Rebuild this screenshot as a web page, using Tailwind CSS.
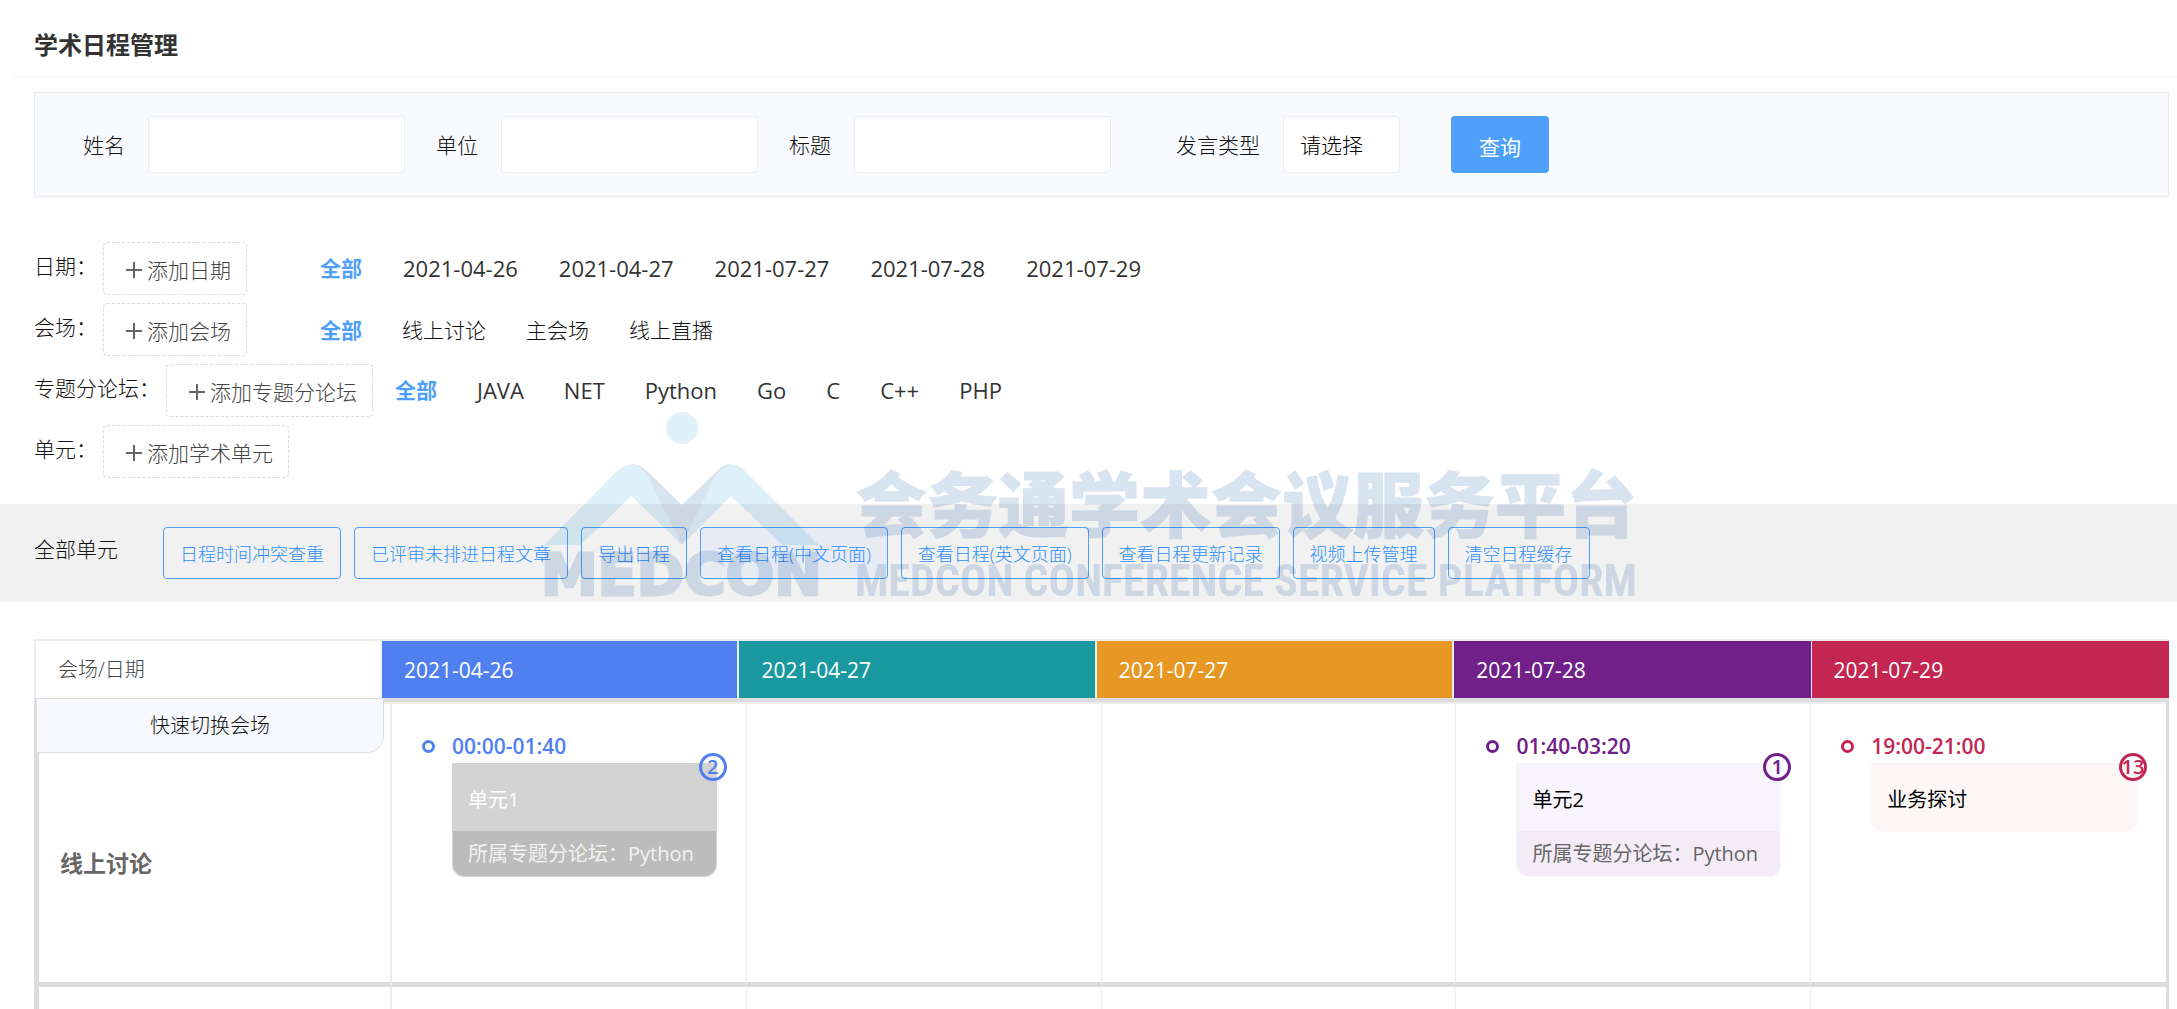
<!DOCTYPE html>
<html lang="zh-CN">
  <head>
    <meta charset="UTF-8" />
    <meta name="viewport" content="width=device-width, initial-scale=1.0" />
    <title>学术日程管理</title>
    <script src="https://cdn.jsdelivr.net/npm/@tailwindcss/browser@4"></script>
  </head>
  <body class="h-screen overflow-hidden bg-white font-['Open_Sans','Noto_Sans_CJK_SC',sans-serif] text-[21px] leading-8 text-[#333]">
    <header class="ml-3 flex h-[77px] items-center border-b border-[#f3f3f3] pl-[22px] pb-[10px] pt-6">
      <h1 class="text-2xl font-bold">学术日程管理</h1>
    </header>

    <!-- search -->
    <form class="ml-[34px] mr-2 mt-[15px] flex items-center border border-[#e6e8ea] bg-[#f9fafe] py-[23px] pl-12 font-light text-[#111]">
      <label for="name">姓名</label>
      <input id="name" type="text" class="ml-[23px] mr-[31px] h-[57px] w-[257px] rounded border border-[#ebeef0] bg-white px-4" />
      <label for="unit">单位</label>
      <input id="unit" type="text" class="ml-[23px] mr-[31px] h-[57px] w-[257px] rounded border border-[#ebeef0] bg-white px-4" />
      <label for="title">标题</label>
      <input id="title" type="text" class="ml-[23px] mr-[65px] h-[57px] w-[257px] rounded border border-[#ebeef0] bg-white px-4" />
      <label for="type">发言类型</label>
      <select id="type" class="ml-[23px] h-[57px] w-[117px] appearance-none rounded border border-[#ebeef0] bg-white px-4 text-black">
        <option>请选择</option>
      </select>
      <button type="button" class="ml-[51px] h-[57px] rounded bg-[#4d9ffa] px-7 pt-1 font-normal text-white">查询</button>
    </form>

    <!-- filters -->
    <section class="ml-[34px] mt-[45px] flex flex-col gap-2">
      <div class="flex items-center">
        <div class="flex min-w-[264px] items-center font-light text-[#111]">
          <span class="mr-[6px] pb-[5px]">日期：</span>
          <button type="button" class="flex h-[53px] items-center rounded border border-dashed border-[#d9d9d9] pl-[22px] pr-[15px] pt-[3px] text-[#444]">
            <svg class="mr-[5px] size-4" viewBox="0 0 16 16" stroke="#666" stroke-width="2"><path d="M0 8h16M8 0v16" /></svg>
            添加日期
          </button>
        </div>
        <nav class="ml-[22px] flex items-center gap-[41px] pb-[2px] text-[22px]">
          <a href="#" class="text-[21px] font-bold text-[#4d9ffa]">全部</a>
          <a href="#">2021-04-26</a>
          <a href="#">2021-04-27</a>
          <a href="#">2021-07-27</a>
          <a href="#">2021-07-28</a>
          <a href="#">2021-07-29</a>
        </nav>
      </div>
      <div class="flex items-center">
        <div class="flex min-w-[264px] items-center font-light text-[#111]">
          <span class="mr-[6px] pb-[5px]">会场：</span>
          <button type="button" class="flex h-[53px] items-center rounded border border-dashed border-[#d9d9d9] pl-[22px] pr-[15px] pt-[3px] text-[#444]">
            <svg class="mr-[5px] size-4" viewBox="0 0 16 16" stroke="#666" stroke-width="2"><path d="M0 8h16M8 0v16" /></svg>
            添加会场
          </button>
        </div>
        <nav class="ml-[22px] flex items-center gap-10 font-light text-[#111]">
          <a href="#" class="font-bold text-[#4d9ffa]">全部</a>
          <a href="#">线上讨论</a>
          <a href="#">主会场</a>
          <a href="#">线上直播</a>
        </nav>
      </div>
      <div class="flex items-center">
        <div class="flex min-w-[264px] items-center font-light text-[#111]">
          <span class="mr-[6px] pb-[5px]">专题分论坛：</span>
          <button type="button" class="flex h-[53px] items-center rounded border border-dashed border-[#d9d9d9] pl-[22px] pr-[15px] pt-[3px] text-[#444]">
            <svg class="mr-[5px] size-4" viewBox="0 0 16 16" stroke="#666" stroke-width="2"><path d="M0 8h16M8 0v16" /></svg>
            添加专题分论坛
          </button>
        </div>
        <nav class="ml-[22px] flex items-center gap-10 pb-[2px] text-[22px]">
          <a href="#" class="text-[21px] font-bold text-[#4d9ffa]">全部</a>
          <a href="#">JAVA</a>
          <a href="#">NET</a>
          <a href="#">Python</a>
          <a href="#">Go</a>
          <a href="#">C</a>
          <a href="#">C++</a>
          <a href="#">PHP</a>
        </nav>
      </div>
      <div class="flex items-center font-light text-[#111]">
        <span class="mr-[6px] pb-[5px]">单元：</span>
        <button type="button" class="flex h-[53px] items-center rounded border border-dashed border-[#d9d9d9] pl-[22px] pr-[15px] pt-[3px] text-[#444]">
          <svg class="mr-[5px] size-4" viewBox="0 0 16 16" stroke="#666" stroke-width="2"><path d="M0 8h16M8 0v16" /></svg>
          添加学术单元
        </button>
      </div>
    </section>

    <!-- toolbar -->
    <section class="mt-[26px] flex h-[98px] items-center gap-[13px] bg-[#f1f1f1] pl-[34px] text-lg font-light text-[#2f8ff8]">
      <h2 class="mr-8 pb-2 text-[21px] text-[#111]">全部单元</h2>
      <button type="button" class="h-[52px] rounded border border-[#4d9ffa] px-4 pt-[2px]">日程时间冲突查重</button>
      <button type="button" class="h-[52px] rounded border border-[#4d9ffa] px-4 pt-[2px]">已评审未排进日程文章</button>
      <button type="button" class="h-[52px] rounded border border-[#4d9ffa] px-4 pt-[2px]">导出日程</button>
      <button type="button" class="h-[52px] rounded border border-[#4d9ffa] bg-[#e6ebf4] px-4 pt-[2px]">查看日程(中文页面)</button>
      <button type="button" class="h-[52px] rounded border border-[#4d9ffa] px-4 pt-[2px]">查看日程(英文页面)</button>
      <button type="button" class="h-[52px] rounded border border-[#4d9ffa] px-4 pt-[2px]">查看日程更新记录</button>
      <button type="button" class="h-[52px] rounded border border-[#4d9ffa] px-4 pt-[2px]">视频上传管理</button>
      <button type="button" class="h-[52px] rounded border border-[#4d9ffa] px-4 pt-[2px]">清空日程缓存</button>
    </section>

    <!-- schedule -->
    <section class="relative ml-[34px] mr-2 mt-[37px] text-xl leading-7">
      <table class="w-full table-fixed border-separate border-spacing-0 border-l-2 border-t-2 border-[#ededed] text-left">
        <thead>
          <tr class="h-[57px] text-[21px] text-white">
            <th class="w-[346px] border-r border-[#ededed] pl-[22px] text-xl font-light text-[#444]">会场/日期</th>
            <th class="border-r-2 border-[#ededed] bg-[#5080f0] pl-[22px] font-medium">2021-04-26</th>
            <th class="border-r-2 border-[#ededed] bg-[#1a989f] pl-[22px] font-medium">2021-04-27</th>
            <th class="border-r-2 border-[#ededed] bg-[#e79724] pl-[22px] font-medium">2021-07-27</th>
            <th class="border-r border-[#ededed] bg-[#702088] pl-[22px] font-medium">2021-07-28</th>
            <th class="bg-[#c32651] pl-[22px] font-medium">2021-07-29</th>
          </tr>
        </thead>
      </table>
      <table class="w-full table-fixed border-separate border-spacing-0 border-l-[5px] border-r-[3px] border-t-4 border-[#dcdcdc]">
        <tbody>
          <tr class="h-[285px] align-top">
            <th class="w-[353px] border-b-[5px] border-r-2 border-t-2 border-b-[#dcdcdc] border-r-[#ededed] border-t-[#ededed] pl-[21px] pt-10 text-left align-middle text-[23px] font-bold text-[#666]">线上讨论</th>
            <td class="border-b-[5px] border-r border-t-2 border-b-[#dcdcdc] border-r-[#ededed] border-t-[#ededed] pl-[30px] pr-[29px] pt-7">
              <div class="flex items-center gap-[17px] text-[21px] font-semibold text-[#5080f0]">
                <i class="size-[13px] rounded-full border-[3px] border-current"></i>
                <span>00:00-01:40</span>
              </div>
              <article class="relative ml-[30px] mt-[3px] rounded-b-xl border border-[#d3d3d3] bg-[#d3d3d3] text-white">
                <h3 class="px-[15px] pb-[17px] pt-[22px]">单元1</h3>
                <p class="rounded-b-xl bg-[#bcbcbc] px-[15px] pb-2 pt-[9px] text-[#f2f2f2]">所属专题分论坛：Python</p>
                <span class="absolute -right-[11px] -top-[11px] flex size-7 items-center justify-center rounded-full border-[3px] border-[#5080f0] font-semibold text-[#5080f0]">2</span>
              </article>
            </td>
            <td class="border-b-[5px] border-r border-t-2 border-b-[#dcdcdc] border-r-[#ededed] border-t-[#ededed]"></td>
            <td class="border-b-[5px] border-r border-t-2 border-b-[#dcdcdc] border-r-[#ededed] border-t-[#ededed]"></td>
            <td class="border-b-[5px] border-r border-t-2 border-b-[#dcdcdc] border-r-[#ededed] border-t-[#ededed] pl-[30px] pr-[29px] pt-7">
              <div class="flex items-center gap-[17px] text-[21px] font-semibold text-[#702088]">
                <i class="size-[13px] rounded-full border-[3px] border-current"></i>
                <span>01:40-03:20</span>
              </div>
              <article class="relative ml-[30px] mt-[3px] rounded-b-xl border border-[#f8f4fb] bg-[#f8f4fb] text-black">
                <h3 class="px-[15px] pb-[17px] pt-[22px]">单元2</h3>
                <p class="rounded-b-xl bg-[#f3ecf7] px-[15px] pb-2 pt-[9px] text-[#666]">所属专题分论坛：Python</p>
                <span class="absolute -right-[11px] -top-[11px] flex size-7 items-center justify-center rounded-full border-[3px] border-[#702088] font-semibold text-[#702088]">1</span>
              </article>
            </td>
            <td class="border-b-[5px] border-t-2 border-b-[#dcdcdc] border-t-[#ededed] pl-[30px] pr-[29px] pt-7">
              <div class="flex items-center gap-[17px] text-[21px] font-semibold text-[#c32651]">
                <i class="size-[13px] rounded-full border-[3px] border-current"></i>
                <span>19:00-21:00</span>
              </div>
              <article class="relative ml-[30px] mt-[3px] rounded-b-xl border border-[#fcf6f6] bg-[#fcf6f6] text-black">
                <h3 class="px-[15px] pb-[17px] pt-[22px]">业务探讨</h3>
                <span class="absolute -right-[11px] -top-[11px] flex size-7 items-center justify-center rounded-full border-[3px] border-[#c32651] font-semibold text-[#c32651]">13</span>
              </article>
            </td>
          </tr>
          <tr class="h-[285px]">
            <th class="border-r-2 border-[#ededed]"></th>
            <td class="border-r border-[#ededed]"></td>
            <td class="border-r border-[#ededed]"></td>
            <td class="border-r border-[#ededed]"></td>
            <td class="border-r border-[#ededed]"></td>
            <td></td>
          </tr>
        </tbody>
      </table>
      <button type="button" class="absolute left-[2px] top-[59px] h-[55px] w-[348px] rounded-br-2xl border border-[#dcdde0] bg-[#f8f9fe] font-light text-[#111]">快速切换会场</button>
    </section>

    <!-- watermark -->
    <div class="pointer-events-none fixed inset-0 flex items-center justify-center mix-blend-multiply">
      <svg class="h-[190px] w-[1100px]" viewBox="540 410 1100 190" fill="#d9e4f1">
        <circle cx="683" cy="428" r="16" fill="#def0f9" />
        <path d="M632 464Q641 464 648 471L683 505L718 471Q725 464 732 464L683 545Z" />
        <path d="M545 545L618 471Q632 458 645 471Q650 477 654 487L683 545L632.5 496L581.500 545Z" fill="#def0f9" />
        <path d="M820 545L746 471Q733 458 720 471Q715 477 711 487L683 545L732 496L783.500 545Z" fill="#def0f9" />
        <text x="542" y="595" stroke="#d9e4f1" stroke-width="3" class="font-['DejaVu_Sans'] text-[57px] font-bold">MEDCON</text>
        <text x="857" y="531" stroke="#d9e4f1" stroke-width="1" class="font-['Noto_Sans_CJK_SC'] text-[71px] font-black">会务通学术会议服务平台</text>
        <text x="856" y="596" class="font-['Roboto_Condensed','Roboto',sans-serif] text-[44px] font-bold">MEDCON CONFERENCE SERVICE PLATFORM</text>
      </svg>
    </div>
  </body>
</html>
